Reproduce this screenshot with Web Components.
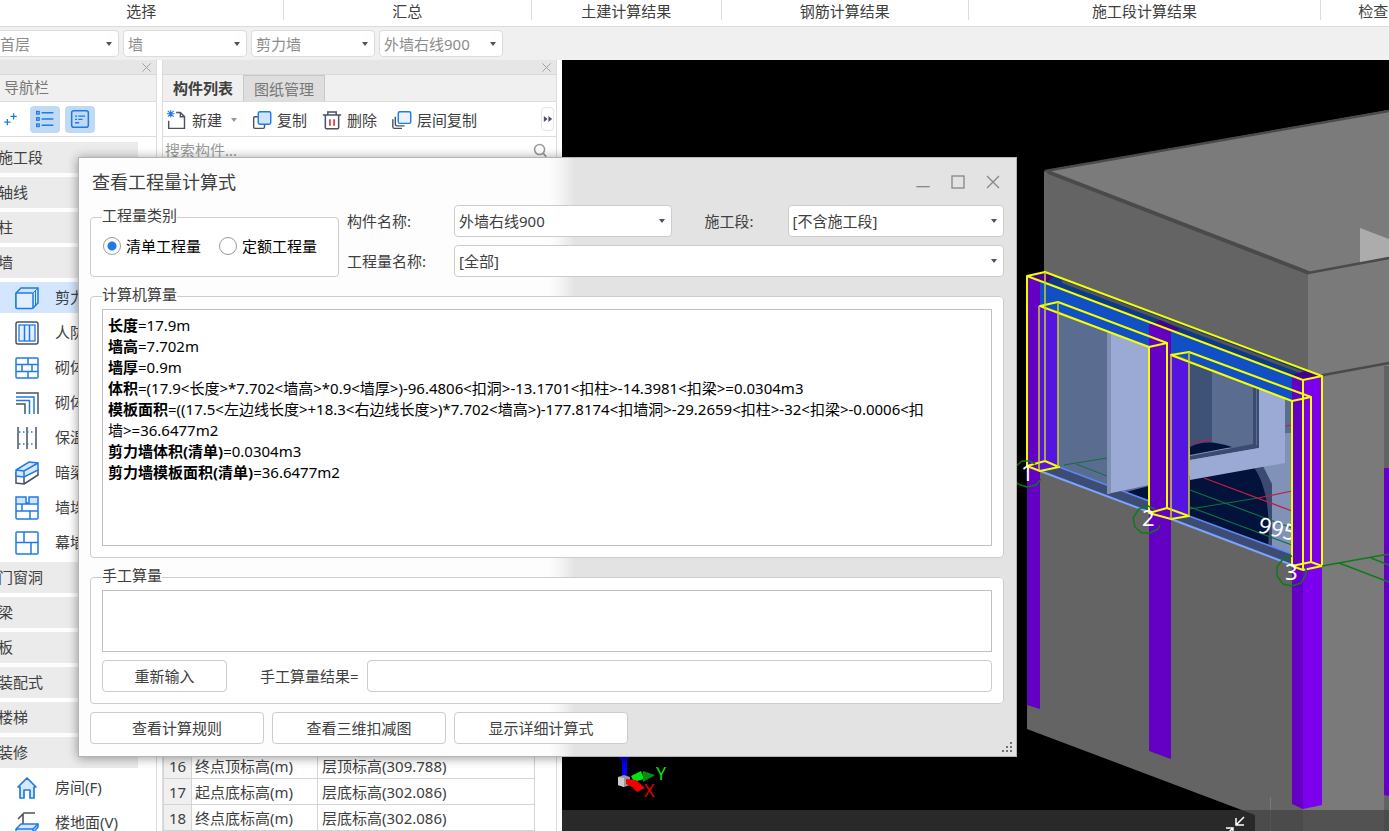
<!DOCTYPE html>
<html lang="zh-CN">
<head>
<meta charset="utf-8">
<title>查看工程量计算式</title>
<style>
  body { margin: 0; font: 15px/20px "Noto Sans", "Noto Sans CJK SC", sans-serif; color: #404040; background: #fff; }
</style>
</head>
<body>
<cost-app></cost-app>

<script>
const define = (name, html, setup) => {
  const tpl = document.createElement('template');
  tpl.innerHTML = '<style>*{box-sizing:border-box}:host{display:block;box-sizing:border-box}button,input,select,textarea{font:inherit;color:inherit;margin:0}</style>' + html;
  customElements.define(name, class extends HTMLElement {
    constructor() {
      super();
      this.attachShadow({ mode: 'open' }).append(tpl.content.cloneNode(true));
    }
    connectedCallback() { if (setup) setup(this.shadowRoot, this); }
  });
};

/* ---------- icons ---------- */
const ICONS = {
  plus: '<g stroke="#1f7ae8" stroke-width="2"><path d="M17 2v10M12 7h10M7 11v10M2 16h10"/></g>',
  list: '<g stroke="#1f7ae8" stroke-width="1.6"><path d="M8 4.500h14M8 12h14M8 19.500h14"/><rect x="2" y="3" width="3" height="3"/><rect x="2" y="10.500" width="3" height="3"/><rect x="2" y="18" width="3" height="3"/></g>',
  form: '<g stroke="#1f7ae8" stroke-width="1.800"><rect x="2" y="2" width="20" height="20" rx="2.500"/><path d="M6 8.500h2.500M10 8.500h8M6 12.500h2.500M10 12.500h5M6 16.500h5" stroke-width="1.600"/></g>',
  fresh: '<path d="M2 13v9h19V8l-5-5h-5M16 3v5h5" stroke="#4a5163" stroke-width="1.700"/><path d="M1 1l7 7M8 1L1 8M4.500 0v9M0 4.500h9" stroke="#1f7ae8" stroke-width="1.300"/>',
  copy: '<path d="M7 8H3.500Q2 8 2 9.500v11Q2 22 3.500 22h10q1.500 0 1.500-1.500V17" stroke="#4a5163" stroke-width="1.700"/><rect x="7.500" y="2" width="15" height="15" rx="2" fill="#cfe4fd" stroke="#1f7ae8" stroke-width="1.700"/>',
  trash: '<path d="M1 6h22M7 6V2.500h10V6M4 6v15q0 1.500 1.500 1.500h13q1.500 0 1.500-1.500V6" stroke="#4a5163" stroke-width="1.800"/><path d="M9.500 11v8M14.500 11v8" stroke="#e0323c" stroke-width="2"/>',
  layers: '<path d="M4 8v9q0 2 2 2h9M1 11v9q0 2 2 2h9" stroke="#4a5163" stroke-width="1.700"/><rect x="7.500" y="2" width="15" height="14" rx="2" fill="#e9f3ff" stroke="#1f7ae8" stroke-width="1.700"/>',
  box: '<path d="M1 7l5-5h17v15l-5 5H2q-1 0-1-1z" fill="#cfe4fd" stroke="#1f7ae8" stroke-width="1.500"/><rect x="1" y="7" width="17" height="15.500" rx="1" fill="#e3effd" stroke="#1f7ae8" stroke-width="1.500"/><path d="M18 7l5-5M20.500 5v14.500" stroke="#1f7ae8"/>',
  civil: '<rect x="1" y="1" width="22" height="22" rx="2" stroke="#4a5163" stroke-width="1.500"/><rect x="4" y="4" width="16" height="16" fill="#e3effd" stroke="#1f7ae8" stroke-width="1.300"/><path d="M9.500 4v16M14.500 4v16" stroke="#1f7ae8" stroke-width="1.500"/>',
  brick: '<g stroke="#1f7ae8" stroke-width="1.500"><rect x="1" y="2" width="22" height="20" rx="1"/><path d="M1 8.500h22M1 15.500h22M13 2v6.500M7 8.500v7M17 8.500v7M13 15.500V22"/></g>',
  pipe: '<path d="M1 2h22v21M1 13h9v10" stroke="#4a5163" stroke-width="1.500"/><path d="M1 6h18v17M1 9.500h13.500V23" stroke="#1f7ae8" stroke-width="1.500"/>',
  insul: '<path d="M3 1v22M12 1v22M21 1v22" stroke="#4a5163" stroke-width="1.500"/><path d="M4 6h17M4 18h17" stroke="#1f7ae8" stroke-width="1.500" stroke-dasharray="1.500 2.500"/>',
  beam: '<path d="M1 11v11l8 1V12M9 23l14-9V8" stroke="#4a5163" stroke-width="1.500"/><path d="M1 9L14 1l9 1v7L9 16l-8-1z" fill="#d7e8fd" stroke="#1f7ae8" stroke-width="1.500"/><path d="M1 9l8 1 14-8M9 10v6" stroke="#1f7ae8" stroke-width="1.500"/>',
  stack: '<path d="M2 1h9v6H2zM14 1h9v6h-9z" fill="#cfe4fd"/><g stroke="#1f7ae8" stroke-width="1.500"><path d="M1 1h10v6h3V1h9v21q0 1-1 1H2q-1 0-1-1zM1 8h22M1 15h22M7 8v7M15 15v8"/></g>',
  curtain: '<g stroke="#1f7ae8" stroke-width="1.500"><rect x="1" y="1" width="22" height="22" rx="1"/><path d="M1 11.500h22M9 1v10.500M16 11.500V23"/></g>',
  house: '<path d="M3 11L12 2l9 9h-2v11h-4v-8H9v8H5V11z" fill="#d7e8fd" stroke="#1f7ae8" stroke-width="1.700" stroke-linejoin="round"/>',
  floor: '<path d="M3 8l6-6h11M8 3v10" stroke="#4a5163" stroke-width="1.600"/><path d="M1 18l5-5h17v3l-5 6H1z" fill="#d7e8fd" stroke="#1f7ae8" stroke-width="1.500"/><path d="M1 18h17l5-5M18 18v4" stroke="#1f7ae8" stroke-width="1.500"/>',
  close: '<path d="M3 3l18 18M21 3L3 21" stroke="currentColor" stroke-width="2"/>',
  max: '<rect x="3" y="3" width="18" height="18" stroke="currentColor" stroke-width="2"/>',
  min: '<path d="M2 19h20" stroke="currentColor" stroke-width="2"/>',
  search: '<circle cx="10.500" cy="10.500" r="8" stroke="#9a9a9a" stroke-width="2.500"/><path d="M16 16l5 6" stroke="#9a9a9a" stroke-width="3"/>',
  more: '<path d="M2 5l9 7-9 7zM13 5l9 7-9 7z" fill="#4a5163"/>'
};
define('app-icon', `<style>:host{width:var(--s,20px);height:var(--s,20px);flex:none}svg{display:block;width:100%;height:100%}</style><svg viewBox="0 0 24 24" fill="none" aria-hidden="true"></svg>`,
  (r, el) => { r.querySelector('svg').innerHTML = ICONS[el.getAttribute('name')]; });

/* ---------- drop-down, with an optional visible label ---------- */
define('select-field', `<style>
  :host{display:flex;align-items:center}
  label{flex:none;width:var(--label-w,0px);padding-left:var(--label-pad,0px);white-space:nowrap}
  label:empty{display:none}
  span{position:relative;flex:1;min-width:0;display:flex}
  span::after{content:"";position:absolute;right:7px;top:50%;margin-top:-2px;border:3px solid transparent;border-top:4px solid #4a5163;border-bottom:0;pointer-events:none}
  select{appearance:none;width:100%;height:var(--h,32px);border:1px solid var(--line,#ccc);border-radius:4px;background:#fff;padding:0 16px 0 4px;color:var(--ink,#404040);text-overflow:ellipsis}
</style><label for="s"></label><span><select id="s"><option></option></select></span>`,
  (r, el) => {
    r.querySelector('label').textContent = el.getAttribute('label') || '';
    if (el.getAttribute('name')) r.querySelector('select').setAttribute('aria-label', el.getAttribute('name'));
    r.querySelector('option').textContent = el.getAttribute('value');
  });

/* ---------- ribbon captions ---------- */
define('ribbon-groups', `<style>
  :host{display:flex;height:27px;overflow:hidden;border-bottom:1px solid #dcdcdc;background:#fff;flex:none}
  div{min-width:0;height:20px;flex:var(--w) 1 0;text-align:center;white-space:nowrap;line-height:22px;border-right:1px solid #dcdcdc}
  div:last-child{border:0;text-align:left;padding-left:37px}
</style>
<div style="--w:284">选择</div><div style="--w:248">汇总</div><div style="--w:190">土建计算结果</div><div style="--w:247">钢筋计算结果</div><div style="--w:353">施工段计算结果</div><div style="--w:31">检查</div>`);

define('filter-bar', `<style>
  :host{display:flex;gap:4px;height:33px;align-items:center;background:#f0f0f0;flex:none}
  select-field{width:124px;--h:27px;--ink:#8c8c8c;--line:#dcdcdc}
  select-field:first-of-type{margin-left:-5px}
</style>
<select-field name="楼层" value="首层"></select-field><select-field name="构件类别" value="墙"></select-field><select-field name="构件类型" value="剪力墙"></select-field><select-field name="构件" value="外墙右线900"></select-field>`);

/* ---------- docked panel frame ---------- */
define('dock-panel', `<style>
  :host{display:flex;flex-direction:column;min-height:0;overflow:hidden;border-right:1px solid #dcdcdc;background:#fff}
  .grip{height:15px;flex:none;display:flex;justify-content:flex-end;align-items:center;padding-right:4px;background:#e6e6e6;border-bottom:1px solid #d8d8d8}
  .grip button{border:0;background:none;padding:0;color:#999;--s:11px}
  .head{height:27px;flex:none;display:flex;background:#f0f0f0;border-bottom:1px solid #dcdcdc}
  .tools{height:35px;flex:none;display:flex;align-items:center;border-bottom:1px solid #dcdcdc}
</style>
<div class="grip"><button aria-label="关闭"><app-icon name="close"></app-icon></button></div>
<div class="head"><slot name="head"></slot></div><div class="tools"><slot name="tools"></slot></div><slot></slot>`);

/* ---------- navigation ---------- */
define('nav-item', `<style>
  :host{height:31px;flex:none;line-height:31px;white-space:nowrap}
  a{display:flex;align-items:center;height:100%;color:#404040;text-decoration:none}
  a.sec{background:#ebebeb;margin-left:-2px}
  a.sub{padding-left:15px;gap:16px;--s:24px}
  a.on{background:#d3e6fd}
</style><a href="#"><slot></slot></a>`, (r, el) => {
  const a = r.querySelector('a'), icon = el.getAttribute('icon');
  a.className = icon ? 'sub' : 'sec';
  if (el.hasAttribute('current')) { a.classList.add('on'); a.setAttribute('aria-current', 'true'); }
  if (icon) { const i = document.createElement('app-icon'); i.setAttribute('name', icon); a.prepend(i); }
});
define('nav-panel', `<style>
  :host{display:flex;min-height:0}
  dock-panel{flex:1;min-width:0}
  h2{margin:0;font-size:15px;font-weight:400;line-height:25px;padding-left:4px;color:#777}
  button{border:0;padding:0;width:30px;height:27px;border-radius:4px;background:none;display:grid;place-items:center;margin-right:5px}
  button.on{background:#c0daf4}
  button.add{margin-right:0;place-items:center start;padding-left:3px;--s:15px}
  nav{display:flex;flex-direction:column;gap:4px;width:138px;padding-top:5px;overflow:hidden}
</style>
<dock-panel>
  <h2 slot="head">导航栏</h2>
  <button slot="tools" class="add" aria-label="添加"><app-icon name="plus"></app-icon></button>
  <button slot="tools" class="on" aria-label="列表"><app-icon name="list"></app-icon></button>
  <button slot="tools" class="on" aria-label="详情"><app-icon name="form"></app-icon></button>
  <nav>
    <nav-item>施工段</nav-item><nav-item>轴线</nav-item><nav-item>柱</nav-item><nav-item>墙</nav-item>
    <nav-item icon="box" current>剪力墙</nav-item><nav-item icon="civil">人防门</nav-item><nav-item icon="brick">砌体墙</nav-item><nav-item icon="pipe">砌体加筋</nav-item><nav-item icon="insul">保温墙</nav-item><nav-item icon="beam">暗梁</nav-item><nav-item icon="stack">墙垛</nav-item><nav-item icon="curtain">幕墙</nav-item>
    <nav-item>门窗洞</nav-item><nav-item>梁</nav-item><nav-item>板</nav-item><nav-item>装配式</nav-item><nav-item>楼梯</nav-item><nav-item>装修</nav-item>
    <nav-item icon="house">房间(F)</nav-item><nav-item icon="floor">楼地面(V)</nav-item>
  </nav>
</dock-panel>`);

/* ---------- component list and properties ---------- */
define('component-panel', `<style>
  :host{display:flex;min-height:0}
  dock-panel{flex:1;min-width:0;border-left:1px solid #dcdcdc}
  .tab{border:0;border-right:1px solid #c8c8c8;background:#f0f0f0;padding:0 10px;font-weight:700}
  .tab+.tab{background:#dedede;color:#777;font-weight:400;border-top:1px solid #c8c8c8}
  .tool{border:0;background:none;padding:2px 0 0;display:flex;align-items:center;gap:5px;margin-right:15px;white-space:nowrap}
  .first{margin-left:4px}
  .tri::after{content:"";margin-left:4px;border:3px solid transparent;border-top:4px solid #999;border-bottom:0}
  .more{margin-left:auto;margin-right:2px;width:13px;height:24px;padding:0;border:1px solid #e4e4e4;border-radius:4px;background:#fff;display:grid;place-items:center;--s:10px}
  .search{display:flex;align-items:center;height:26px;flex:none;padding-right:8px;--s:15px}
  input{border:0;outline:0;flex:1;min-width:0;padding:0 2px;background:none}
  input::placeholder{color:#999;opacity:1}
  table{margin-top:auto;flex:none;width:372px;border-collapse:collapse;table-layout:fixed}
  td,th{height:26px;padding:0 4px;border:1px solid #d4d4d4;text-align:left;font-weight:400;line-height:20px}
  th{background:#f0f0f0;width:28px;text-align:center}
  td:nth-child(2){width:126px;padding-left:3px}
</style>
<dock-panel>
  <button class="tab" slot="head">构件列表</button><button class="tab" slot="head">图纸管理</button>
  <button class="tool first tri" slot="tools"><app-icon name="fresh"></app-icon>新建</button>
  <button class="tool" slot="tools"><app-icon name="copy"></app-icon>复制</button>
  <button class="tool" slot="tools"><app-icon name="trash"></app-icon>删除</button>
  <button class="tool" slot="tools"><app-icon name="layers"></app-icon>层间复制</button>
  <button class="more" slot="tools" aria-label="更多"><app-icon name="more"></app-icon></button>
  <div class="search"><input aria-label="搜索构件" placeholder="搜索构件..."><app-icon name="search"></app-icon></div>
  <table>
    <tr><th scope="row">16</th><td>终点顶标高(m)</td><td>层顶标高(309.788)</td></tr>
    <tr><th scope="row">17</th><td>起点底标高(m)</td><td>层底标高(302.086)</td></tr>
    <tr><th scope="row">18</th><td>终点底标高(m)</td><td>层底标高(302.086)</td></tr>
  </table>
</dock-panel>`);

/* ---------- 3D view ---------- */
define('model-view', `<style>
  :host{background:#000;overflow:hidden;min-width:0;min-height:0;display:flex}
  svg{flex:1;min-width:0;width:100%;height:100%}
  text{font-family:"Noto Sans","Noto Sans CJK SC",sans-serif}
</style>
<svg viewBox="562 60 827 771" preserveAspectRatio="xMaxYMax slice" role="img" aria-label="三维模型" fill="none">
  <path fill="#646464" d="M1044 171L1308 273V831H1255V815L1027 729V460H1044z"/>
  <path fill="#7b7b7b" d="M1044 171L1389 110V258L1308 273z"/>
  <path fill="#7a7a7a" d="M1308 273L1389 258V831H1303V570L1308 560z"/>
  <path fill="#acacac" d="M1360 228L1389 239V257L1360 263z"/>
  <path stroke="#4a4a4a" stroke-width="2.500" d="M1045 171L1389 111M1308 273L1389 258M1318 376L1389 363"/>
  <path stroke="#4a4a4a" stroke-width="4" d="M1048 172L1309 273"/>
  <path fill="#636363" d="M1384 366H1389V831H1384z"/><path fill="#6300c4" d="M1384 468H1389V796L1384 795z"/>

  <path fill="#5b6c91" d="M1058 310L1149 345V505L1058 467z"/>
  <path stroke="#0b7040" d="M1064 465L1107 458M1076 464L1107 476"/>
  <path fill="#3c4c75" d="M1040 471L1059 467L1149 500V513z"/>
  <path fill="#02123a" d="M1126 492L1149 486V500z"/>
  <path stroke="#5c8af0" stroke-width="1.500" d="M1059 467L1149 501"/>
  <path stroke="#7ba4ff" stroke-width="2" d="M1040 471L1149 512"/>
  <path fill="#9aaad4" d="M1107 328L1149 344V485L1107 494z"/><path fill="#7f90b4" d="M1107 328L1111 330V493L1107 494z"/>

  <path fill="#8092b8" d="M1189 355L1292 398V566L1189 516z"/>
  <path fill="#02123a" d="M1189 476L1253 465Q1272 490 1270 548L1189 520z"/>
  <path fill="#3b4a70" d="M1253 466L1263 466L1272 484V548H1268Q1272 492 1253 466z"/>
  <path fill="#5b6c91" d="M1212 363L1292 396V433H1286L1259 448H1212z"/>
  <path fill="#3e5177" d="M1189 355L1212 364V442L1189 448z"/>
  <path fill="#3b4a70" d="M1190 456L1253 444V384L1259 386V448L1190 460z"/>
  <path fill="#3e5177" d="M1190 448V440L1212 442L1230 447z"/>
  <path fill="#02123a" d="M1190 447Q1206 438 1232 447L1190 455z"/>
  <path fill="#5b6c91" d="M1256 384h1v61h-1z"/>
  <path fill="#9aaad4" d="M1259 384L1285 395V463L1190 480V460L1259 448z"/>
  <path stroke="#c01c48" stroke-width="1.200" d="M1191 443L1212 439.500M1286 426l6-1M1204 478L1292 511M1258 498L1292 491"/>
  <path stroke="#0b7040" stroke-width="1.200" d="M1190 490L1292 528M1190 509L1258 498M1190 507L1292 545"/>
  <path fill="#3c4c75" d="M1171 519L1189 516L1292 554V566z"/>
  <path stroke="#5c8af0" stroke-width="1.500" d="M1189 516L1292 554"/>
  <path stroke="#7ba4ff" stroke-width="2" d="M1171 519L1292 565"/>
  <text x="1257" y="532" font-size="22" fill="#fff" transform="rotate(14 1257 532)">995</text>

  <path fill="#0b3a8a" d="M1026 276L1045 272L1322 376L1303 380z"/>
  <path fill="#565456" d="M1062 280L1310 374L1300 373L1062 283z"/>
  <path fill="#104fc4" d="M1027 277L1303 380V405L1167 351L1149 347L1058 311L1039 306z"/>
  <path fill="#47008c" d="M1027 276L1045 272L1054 276L1046 283zM1149 325L1160 320L1180 329L1171 332zM1292 375L1305 371L1322 376L1303 380z"/>
  <path fill="#6300c4" d="M1027 276L1040 282V709L1027 705zM1149 324L1171 331V759L1149 751zM1292 376L1303 380V809L1292 804z"/>
  <path fill="#5514e0" d="M1040 306L1058 312V467L1040 471zM1171 355L1189 361V516L1171 519z"/>
  <path fill="#7a00ee" d="M1303 380L1322 376V805L1303 809z"/>

  <g stroke="#f4ff00" stroke-width="2" stroke-linejoin="round">
    <path d="M1027 276L1045 272L1322 376L1303 380zM1040 306L1058 302L1167 343L1149 347zM1171 355L1189 352L1311 397L1292 401z"/>
    <path d="M1027 276V466M1303 380V570M1322 376V566M1149 347V513M1167 343V508M1292 401V566M1311 397V562"/>
    <path d="M1027 466L1045 461L1059 467L1040 471zM1149 513L1167 508L1189 516L1171 519zM1292 566L1311 562L1322 566L1303 570z"/>
    <path stroke-width="1.500" stroke="#c9d228" d="M1039 306V470M1045 272V461M1058 302V467M1171 355V519M1189 352V516"/>
  </g>
  <g stroke="#107a18" stroke-width="1.500">
    <path d="M1041 479l-5 6-9 2-9-3-5-8 2-9 7-6 8 0 5 3M1155 509l-7-3-9 3-6 9 2 9 7 6 8 0 8-4 2-4M1292 556l-9 3-6 8 0 9 6 8 9 2 9-3 5-9 0-6M1322 566L1389 554M1339 563L1389 582M1371 558l18 7"/>
  </g>
  <g fill="#fff" font-size="22"><text x="1021" y="481">1</text><text x="1142" y="526">2</text><text x="1285" y="580">3</text></g>

  <path fill="#0000f4" d="M622 757h5v21h-5z"/><path fill="#0000b8" d="M618 757h12l-4 5h-4z"/>
  <path fill="#999" d="M618 777l6-2 6 2v8l-6 2-6-2z"/><path fill="#ccc" d="M618 777l6 1v9l-6-2z"/>
  <path fill="#00e410" d="M631 776l10-5 3 8-10 3z"/><path fill="#00900c" d="M643 771l12 4-12 7z"/>
  <path fill="#f40000" d="M626 779l10 1 9 8-8 4-5-5-6-3z"/>
  <text x="656" y="780" font-size="18" fill="#00e410">Y</text><text x="644" y="797" font-size="18" fill="#e40000">X</text>
  <path stroke="#7a7a7a" d="M1270.500 797v34"/>
  <path fill="#3e3e3e" fill-opacity=".66" d="M562 810H1389V831H562z"/>
  <path stroke="#fff" stroke-width="1.500" d="M1244 817l-8 8M1236 818v7h8M1226 828h7v7M1233 828l-8 8"/>
</svg>`);

/* ---------- calculation dialog ---------- */
define('group-box', `<style>
  fieldset{position:relative;margin:0;min-width:0;height:100%;border:1px solid #ccc;border-radius:4px;background:#fff;padding:var(--pad,12px 11px 11px)}
  legend{position:absolute;top:-13px;left:11px;padding:0;line-height:20px;white-space:nowrap;background:linear-gradient(#fdfdfd 12px,#fff 12px)}
</style><fieldset><legend></legend><slot></slot></fieldset>`,
  (r, el) => { r.querySelector('legend').textContent = el.getAttribute('label'); });

define('calc-dialog', `<style>
  :host{display:flex;flex-direction:column;padding:0 12px 12px 11px;border:1px solid #b4b4b4;box-shadow:0 1px 10px rgba(0,0,0,.4);
    background:linear-gradient(90deg,#fdfdfd 470px,#f4f4f4 482px,#e3e3e3 496px)}
  header{display:flex;align-items:center;height:47px;padding-left:2px}
  h1{margin:0 auto 0 0;font-size:18px;font-weight:400;line-height:24px}
  header button{border:0;background:none;padding:0;margin-left:19px;color:#888;--s:16px}
  header button:last-child{margin-right:3px}
  .top{display:grid;grid-template-columns:249px minmax(0,1fr);gap:8px}
  group-box.kind{margin-top:12px;height:60px;--pad:18px 12px 0}
  .radios{display:flex;gap:18px}
  .radios label{display:flex;align-items:center;gap:5px;color:#000;white-space:nowrap}
  input[type=radio]{appearance:none;width:18px;height:18px;border:1px solid #999;border-radius:50%;background:#fff}
  input[type=radio]:checked{background:radial-gradient(circle,#1f7ae8 4px,#fff 5px)}
  .fields{display:grid;grid-template-columns:minmax(0,325fr) minmax(0,333fr);row-gap:8px;align-content:start}
  .fields select-field{--label-w:107px}
  .fields select-field:nth-child(2){--label-w:116px;--label-pad:33px}
  .fields select-field:last-child{grid-column:1/-1}
  .auto,.manual{margin-top:19px}
  .result{height:237px;border:1px solid #c0c0c0;background:#fff;padding:5px 12px 5px 5px;color:#000;line-height:21px;overflow:hidden}
  p{margin:0}
  textarea{display:block;width:100%;height:62px;border:1px solid #c0c0c0;background:#fff;resize:none}
  .row{display:flex;align-items:center;margin-top:8px}
  .row label{margin:0 8px 0 33px;white-space:nowrap}
  .row input{flex:1;min-width:0;height:32px;border:1px solid #ccc;border-radius:4px}
  .btn{height:32px;width:174px;border:1px solid #ccc;border-radius:4px;background:#fff;padding:0;line-height:20px}
  .row .btn{width:125px}
  footer{display:flex;gap:8px;margin-top:8px}
  .size{position:absolute;right:4px;bottom:4px;width:10px;height:10px}
</style>
<header><h1>查看工程量计算式</h1>
  <button aria-label="最小化"><app-icon name="min"></app-icon></button><button aria-label="最大化"><app-icon name="max"></app-icon></button><button aria-label="关闭"><app-icon name="close"></app-icon></button></header>
<div class="top">
  <group-box class="kind" label="工程量类别"><div class="radios">
    <label><input type="radio" name="k" checked>清单工程量</label><label><input type="radio" name="k">定额工程量</label></div></group-box>
  <div class="fields">
    <select-field label="构件名称:" value="外墙右线900"></select-field>
    <select-field label="施工段:" value="[不含施工段]"></select-field>
    <select-field label="工程量名称:" value="[全部]"></select-field>
  </div>
</div>
<group-box class="auto" label="计算机算量"><div class="result">
  <p><b>长度</b>=17.9m</p>
  <p><b>墙高</b>=7.702m</p>
  <p><b>墙厚</b>=0.9m</p>
  <p><b>体积</b>=(17.9&lt;长度&gt;*7.702&lt;墙高&gt;*0.9&lt;墙厚&gt;)-96.4806&lt;扣洞&gt;-13.1701&lt;扣柱&gt;-14.3981&lt;扣梁&gt;=0.0304m3</p>
  <p><b>模板面积</b>=((17.5&lt;左边线长度&gt;+18.3&lt;右边线长度&gt;)*7.702&lt;墙高&gt;)-177.8174&lt;扣墙洞&gt;-29.2659&lt;扣柱&gt;-32&lt;扣梁&gt;-0.0006&lt;扣<br>墙&gt;=36.6477m2</p>
  <p><b>剪力墙体积(清单)</b>=0.0304m3</p>
  <p><b>剪力墙模板面积(清单)</b>=36.6477m2</p>
</div></group-box>
<group-box class="manual" label="手工算量">
  <textarea aria-label="手工算量"></textarea>
  <div class="row"><button class="btn">重新输入</button><label for="res">手工算量结果=</label><input id="res" type="text"></div>
</group-box>
<footer><button class="btn">查看计算规则</button><button class="btn">查看三维扣减图</button><button class="btn">显示详细计算式</button></footer>
<svg class="size" viewBox="0 0 10 10" fill="#6b7280" aria-hidden="true"><path d="M8 0h2v2H8zM4 4h2v2H4zM8 4h2v2H8zM0 8h2v2H0zM4 8h2v2H4zM8 8h2v2H8z"/></svg>`);

define('cost-app', `<style>
  :host{display:flex;flex-direction:column;height:100vh;position:relative;overflow:hidden}
  main{flex:1;min-height:0;display:grid;grid-template-columns:157px 395px minmax(0,1fr);grid-template-rows:minmax(0,1fr);column-gap:5px}
  calc-dialog{position:absolute;left:78px;top:157px;width:min(939px,calc(100% - 96px))}
</style>
<ribbon-groups></ribbon-groups><filter-bar></filter-bar>
<main><nav-panel></nav-panel><component-panel></component-panel><model-view></model-view></main>
<calc-dialog></calc-dialog>`);
</script>
</body>
</html>
